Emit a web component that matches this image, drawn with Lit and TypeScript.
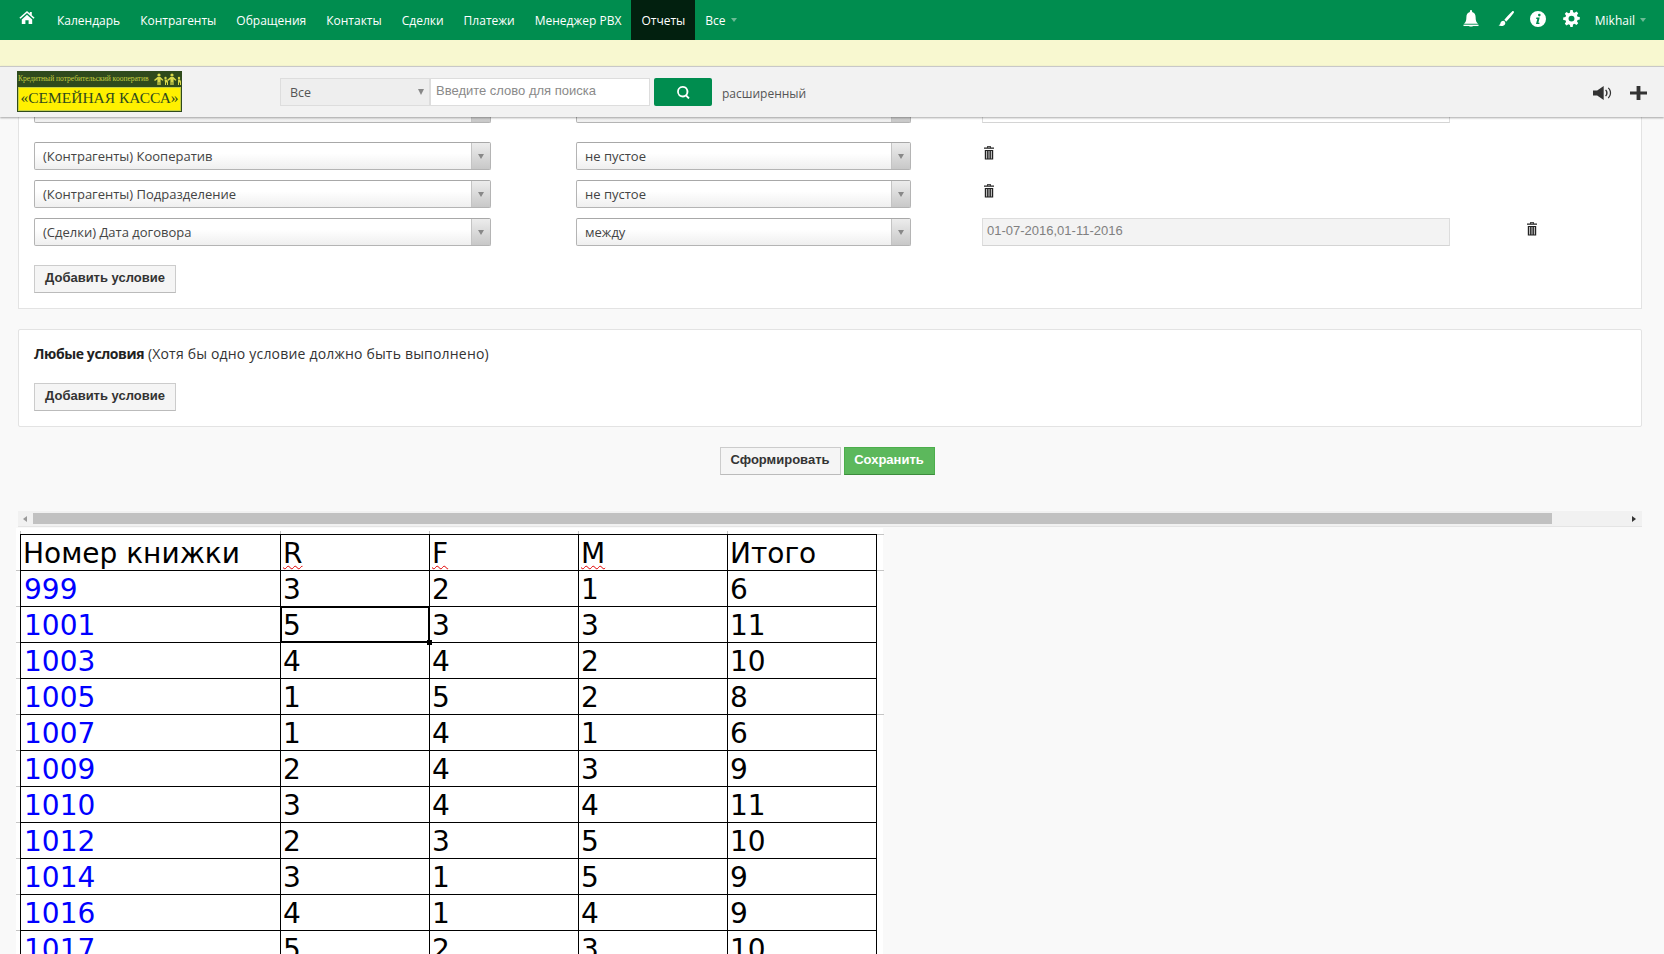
import { LitElement, html, css, svg } from 'lit';
import { customElement } from 'lit/decorators.js';

const ICON = {
  home: svg`<path d="M8 1 .4 8.200l1.100 1.200L8 3.300l6.500 6.100 1.100-1.200L12.800 5.500V2h-2v1.700z"/><path d="M2.800 10 8 5.100 13.200 10v5H9.600v-4H6.400v4H2.800z"/>`,
  bell: svg`<path d="M8 0a1.100 1.100 0 0 0-1.100 1.100v.7C4.500 2.300 3.400 4.200 3.400 6.600c0 3.300-.7 5-2.400 6.400h14c-1.700-1.400-2.400-3.100-2.400-6.400 0-2.400-1.100-4.300-3.500-4.800v-.7A1.100 1.100 0 0 0 8 0z"/><rect x="0.500" y="13.800" width="15" height="1.300"/><path d="M6.300 15.600h3.400A1.700 1.700 0 0 1 8 16.800a1.700 1.700 0 0 1-1.700-1.200z"/>`,
  brush: svg`<path d="M15.600.3c-.4-.4-1-.3-1.500.1C11.500 2.800 8 6.300 6.200 9c.9.2 1.600.9 1.900 1.800 2.400-2.200 5.700-6.200 7.700-9 .3-.5.200-1.100-.2-1.500z"/><path d="M5.400 9.800c-1.700 0-2.700 1-3 2.500-.2 1-.8 1.700-1.900 1.900 1.400 1 3.700 1.100 5.200.3 1.200-.7 1.900-1.800 1.500-3.100-.3-.9-.9-1.500-1.800-1.600z"/>`,
  info: svg`<path fill-rule="evenodd" d="M8 0a8 8 0 1 0 0 16A8 8 0 0 0 8 0zm1.300 2.800a1.300 1.300 0 1 1 0 2.600 1.300 1.300 0 0 1 0-2.600zM6.400 6.600h3.300l-1.300 5.200h1.200l-.3 1.300H6l1.300-5.200H6.100z"/>`,
  gear: svg`<path fill-rule="evenodd" d="M6.900 0h2.200l.4 2.100c.5.100 1 .3 1.400.6l1.800-1.200 1.600 1.600-1.200 1.800c.3.400.5.900.6 1.400l2.100.4v2.200l-2.100.4c-.1.500-.3 1-.6 1.400l1.200 1.800-1.600 1.600-1.800-1.200c-.4.300-.9.500-1.400.6L9.100 16H6.900l-.4-2.100c-.5-.1-1-.3-1.400-.6l-1.800 1.200-1.600-1.600 1.200-1.800c-.3-.4-.5-.9-.6-1.400L.2 9.300V7.100l2.100-.4c.1-.5.3-1 .6-1.400L1.700 3.500l1.600-1.600 1.800 1.200c.4-.3.900-.5 1.400-.6zM8 5.300a2.800 2.800 0 1 0 0 5.600 2.800 2.800 0 0 0 0-5.600z"/>`,
  speaker: svg`<path d="M0 5.500h3.500L9 1v14L3.500 10.500H0z"/><path d="M11 4.500c1.800 1.800 1.800 5.200 0 7l-.8-.8c1.200-1.400 1.200-4 0-5.400zM13.200 2.600c2.800 2.900 2.800 7.900 0 10.800l-.7-.7c2.300-2.600 2.300-6.800 0-9.400z"/>`,
  plus: svg`<path d="M6.200 0h3.600v6.200H16v3.600H9.800V16H6.200V9.800H0V6.200h6.200z"/>`,
  search: svg`<path fill-rule="evenodd" d="M7 0a7 7 0 0 1 5.500 11.300l3.100 3.100-1.700 1.700-3.100-3.100A7 7 0 1 1 7 0zm0 2.300a4.700 4.700 0 1 0 0 9.400 4.700 4.700 0 0 0 0-9.400z"/>`,
  trash: svg`<path d="M4.200 0h3.600v1.600H11v1.200H1V1.600h3.200zm1 .8v.8h1.600V.8z"/><path fill-rule="evenodd" d="M1.800 4h8.400v9.500H1.800zM3.300 5v7.500h.8V5zm2.300 0v7.500h.8V5zm2.300 0v7.500h.8V5z"/>`,
};

const icon = (name: keyof typeof ICON, w: number, h: number, cls = '') => {
  const vb = name === 'trash' ? '0 0 12 14' : '0 0 16 16';
  return html`<svg class="ic ${cls}" width=${w} height=${h} viewBox=${vb} preserveAspectRatio="none" fill="currentColor">${ICON[name]}</svg>`;
};

const NAV = ['Календарь', 'Контрагенты', 'Обращения', 'Контакты', 'Сделки', 'Платежи', 'Менеджер РВХ', 'Отчеты'];

const ROWS = [
  ['999', 3, 2, 1, 6], ['1001', 5, 3, 3, 11], ['1003', 4, 4, 2, 10], ['1005', 1, 5, 2, 8],
  ['1007', 1, 4, 1, 6], ['1009', 2, 4, 3, 9], ['1010', 3, 4, 4, 11], ['1012', 2, 3, 5, 10],
  ['1014', 3, 1, 5, 9], ['1016', 4, 1, 4, 9], ['1017', 5, 2, 3, 10],
];

@customElement('app-root')
export class AppRoot extends LitElement {
  static styles = css`
    :host {
      display: flex;
      flex-direction: column;
      height: 954px;
      overflow: hidden;
      background: #f9f9f9;
      color: #333;
      font: 13px 'Open Sans', sans-serif;
    }
    .ic { display: block; flex: none; }

    .nav {
      flex: none;
      height: 40px;
      display: flex;
      align-items: stretch;
      background: #008d4f;
      color: #fff;
      padding-left: 19px;
      font-size: 12px;
    }
    .home { align-self: center; margin: -5px 12px 0 0; }
    .item { display: flex; align-items: center; padding: 0 10px; }
    .item.active { background: #02200f; }
    .caret {
      width: 0;
      height: 0;
      margin-left: 5px;
      border: 3.500px solid transparent;
      border-top: 4px solid #6dbb95;
      border-bottom: 0;
    }
    .tools { margin-left: auto; display: flex; align-items: center; padding-right: 18px; }
    .tools .ic { margin-top: -3px; }
    .tools .user { display: flex; align-items: center; margin: 0 0 0 15px; }
    .gap19 { width: 19px; }
    .gap16 { width: 16px; }
    .gap17 { width: 17px; }

    .notice { flex: none; height: 26px; background: #f8f8d0; }

    .head {
      flex: none;
      height: 50px;
      position: relative;
      z-index: 2;
      display: flex;
      align-items: flex-start;
      background: #f2f2f2;
      border-top: 1px solid #c8c8c8;
      box-shadow: 0 1px 2px rgba(0, 0, 0, 0.35);
      padding-left: 17px;
    }
    .logo {
      width: 165px;
      height: 41px;
      margin-top: 4px;
      background: #2f4a1c;
      display: flex;
      flex-direction: column;
      box-sizing: border-box;
      padding: 2px 1px 1px;
    }
    .logo .top {
      height: 12px;
      display: flex;
      align-items: center;
      justify-content: space-between;
      color: #c5cf42;
      font: 7.500px/12px 'Liberation Serif', serif;
      white-space: nowrap;
      overflow: hidden;
    }
    .logo .name {
      flex: 1;
      margin-top: 2px;
      background: #fff000;
      border: 1px solid #c5cf42;
      color: #2f4a1c;
      font: 15.500px/20px 'Liberation Serif', serif;
      text-align: center;
      white-space: nowrap;
    }
    .search { display: flex; margin: 11px 0 0 98px; }
    .scope {
      width: 150px;
      height: 28px;
      box-sizing: border-box;
      display: flex;
      align-items: center;
      justify-content: space-between;
      background: #eee;
      border: 1px solid #ddd;
      padding: 0 5px 0 9px;
      color: #555;
      font-size: 12.500px;
    }
    .scope i {
      border: 3.500px solid transparent;
      border-top: 6px solid #888;
      border-bottom: 0;
    }
    .q {
      width: 220px;
      height: 28px;
      box-sizing: border-box;
      background: #fff;
      border: 1px solid #ddd;
      padding: 0 5px 3px;
      display: flex;
      align-items: center;
      color: #8a8a8a;
      font: 13px 'Liberation Sans', sans-serif;
    }
    .go {
      width: 58px;
      height: 28px;
      margin-left: 4px;
      display: flex;
      align-items: center;
      justify-content: center;
      border-radius: 2px;
      background: #008d4f;
      color: #fff;
    }
    .adv { margin: 13px 0 0 10px; color: #555; line-height: 27px; height: 28px; font-size: 12px; }
    .head-r { margin: 18px 17px 0 auto; display: flex; align-items: center; color: #333; gap: 18px; }

    .main { flex: 1; min-height: 0; overflow: hidden; }
    .card {
      margin: 0 22px 0 18px;
      background: #fff;
      border: 1px solid #e3e3e3;
      padding: 0 15px;
    }
    .first { border-top: 0; padding-bottom: 15px; }
    .row { display: flex; align-items: flex-start; height: 28px; margin-top: 10px; }
    .row.cut { height: 6px; margin: 0 0 19px; align-items: flex-end; }
    .row.cut + .row { margin-top: 0; }
    .sel {
      height: 28px;
      flex: none;
      box-sizing: border-box;
      display: flex;
      align-items: center;
      border: 1px solid #b4b4b4;
      border-top-color: #a8a8a8;
      border-radius: 2px;
      background: linear-gradient(#fff 40%, #efefef);
      color: #444;
      padding-left: 8px;
    }
    .sel span { flex: 1; }
    .sel i {
      align-self: stretch;
      width: 18px;
      display: flex;
      align-items: center;
      justify-content: center;
      background: linear-gradient(#ececec, #c8c8c8);
      border-left: 1px solid #c4c4c4;
    }
    .sel i::after {
      content: '';
      border: 3px solid transparent;
      border-top: 5px solid #888;
      border-bottom: 0;
    }
    .w1 { width: 457px; }
    .w2 { width: 335px; margin-left: 85px; }
    .val {
      width: 468px;
      height: 28px;
      flex: none;
      margin-left: 71px;
      box-sizing: border-box;
      border: 1px solid #ddd;
      border-bottom-color: #d4d4d4;
      padding: 0 4px 3px;
      display: flex;
      align-items: center;
      color: #808080;
      background: #f3f3f3;
      font: 13px 'Liberation Sans', sans-serif;
    }
    .val.empty { background: #fff; }
    .del { margin: 4px 0 0 72px; color: #222; }
    .val + .del { margin-left: 76px; }
    .btn {
      display: inline-flex;
      align-items: center;
      justify-content: center;
      height: 28px;
      box-sizing: border-box;
      background: #f5f5f5;
      border: 1px solid #ccc;
      border-bottom-color: #bbb;
      color: #333;
      font: bold 13px 'Liberation Sans', sans-serif;
      padding: 0 0 4px;
    }
    .add { margin-top: 19px; width: 142px; display: flex; }
    .second { margin-top: 20px; padding-top: 14px; padding-bottom: 15px; border-radius: 2px; }
    .title { line-height: 20px; font-size: 14px; letter-spacing: 0.19px; }
    .title b { font-weight: 700; color: #222; letter-spacing: -0.4px; }
    .second .add { margin-top: 19px; }
    .actions { display: flex; justify-content: center; gap: 3px; margin: 20px 22px 0 18px; padding-right: 6px; }
    .save { background: #5cb85c; border-color: #4cae4c; border-bottom-color: #3d8b3d; color: #fff; width: 91px; }
    .form { width: 121px; }

    .scroll {
      margin: 36px 22px 0 18px;
      height: 16px;
      box-sizing: border-box;
      background: #f1f1f1;
      border-bottom: 1px solid #e4e4e4;
      padding: 2px 15px 0;
      position: relative;
    }
    .thumb { width: 1519px; height: 11px; background: #c1c1c1; }
    .scroll i {
      position: absolute;
      top: 5px;
      border: 3px solid transparent;
    }
    .scroll .l { left: 5px; border-left: 0; border-right: 4px solid #9a9a9a; }
    .scroll .r { right: 6px; border-right: 0; border-left: 4px solid #333; }

    .sheet {
      margin: 1px 0 0 16px;
      width: 867px;
      padding: 6px 0 0 4px;
      box-sizing: border-box;
      background: #fff;
    }
    table {
      width: 856px;
      table-layout: fixed;
      border-collapse: collapse;
      font: 28px/33px 'DejaVu Sans', sans-serif;
      color: #000;
    }
    td, th {
      position: relative;
      height: 35px;
      padding: 2px 2px 0;
      box-sizing: border-box;
      border: 1px solid #000;
      font-weight: 400;
      text-align: left;
      white-space: nowrap;
    }
    td.num { color: #00f; padding-left: 3px; }
    .sq { text-decoration: underline wavy #e00000 1px; text-underline-offset: 2px; }
    .cur { position: absolute; inset: -1px; border: 2px solid #000; pointer-events: none; }
    .cur::after {
      content: '';
      position: absolute;
      right: -4px;
      bottom: -4px;
      width: 5px;
      height: 5px;
      background: #000;
    }
    .tk { position: absolute; background: #c4c4c4; }
    .tk.t { top: -4px; left: -1px; width: 1px; height: 3px; }
    .tk.l { left: -5px; top: -1px; height: 1px; width: 4px; }
    .tk.r { right: -8px; top: -1px; height: 1px; width: 7px; }
  `;

  private sel(text: string, cls: string) {
    return html`<div class="sel ${cls}"><span>${text}</span><i></i></div>`;
  }

  private cond(field: string, op: string, value?: string) {
    return html`
      <div class="row">
        ${this.sel(field, 'w1')}
        ${this.sel(op, 'w2')}
        ${value ? html`<div class="val">${value}</div>` : ''}
        <div class="del">${icon('trash', 12, 14)}</div>
      </div>
    `;
  }

  render() {
    return html`
      <div class="nav">
        ${icon('home', 16, 15, 'home')}
        ${NAV.map((n) => html`<div class="item ${n === 'Отчеты' ? 'active' : ''}">${n}</div>`)}
        <div class="item">Все<span class="caret"></span></div>
        <div class="tools">
          ${icon('bell', 16, 17)}
          <span class="gap19"></span>
          ${icon('brush', 16, 16)}
          <span class="gap16"></span>
          ${icon('info', 16, 16)}
          <span class="gap17"></span>
          ${icon('gear', 17, 17)}
          <div class="user">Mikhail<span class="caret"></span></div>
        </div>
      </div>
      <div class="notice"></div>
      <div class="head">
        <div class="logo">
          <div class="top">
            Кредитный потребительский кооператив
            <svg width="30" height="12" viewBox="0 0 30 12" fill="#d8d84a">
              <circle cx="8" cy="2" r="1.600"/><path d="M6.500 4h3l3 3-1 .8L9.600 6.200V12H8.300V9H7.700v3H6.400V6.200L4 8 3 7z"/>
              <circle cx="21" cy="2" r="1.600"/><path d="M19.500 4h3l3 3-1 .8-1.900-1.600V12h-1.300V9h-.6v3h-1.300V6.200L17 8l-1-1z"/>
              <circle cx="14.500" cy="5" r="1.200"/><path d="M13.500 6.500h2l1.500 2v3.500h-1V9.500h-1V12h-1V9.500z"/>
              <circle cx="28" cy="5" r="1.200"/><path d="M27 6.500h2l1 2V12h-1V9.500h-1V12h-1z"/>
            </svg>
          </div>
          <div class="name">«СЕМЕЙНАЯ КАССА»</div>
        </div>
        <div class="search">
          <div class="scope">Все<i></i></div>
          <div class="q">Введите слово для поиска</div>
          <div class="go">${icon('search', 13, 13)}</div>
        </div>
        <div class="adv">расширенный</div>
        <div class="head-r">${icon('speaker', 19, 16)}${icon('plus', 17, 14)}</div>
      </div>
      <div class="main">
        <div class="card first">
          <div class="row cut">
            ${this.sel('', 'w1')}
            ${this.sel('', 'w2')}
            <div class="val empty"></div>
          </div>
          ${this.cond('(Контрагенты) Кооператив', 'не пустое')}
          ${this.cond('(Контрагенты) Подразделение', 'не пустое')}
          ${this.cond('(Сделки) Дата договора', 'между', '01-07-2016,01-11-2016')}
          <div class="btn add">Добавить условие</div>
        </div>
        <div class="card second">
          <div class="title"><b>Любые условия</b> (Хотя бы одно условие должно быть выполнено)</div>
          <div class="btn add">Добавить условие</div>
        </div>
        <div class="actions">
          <div class="btn form">Сформировать</div>
          <div class="btn save">Сохранить</div>
        </div>
        <div class="scroll"><i class="l"></i><div class="thumb"></div><i class="r"></i></div>
        <div class="sheet">
          <table>
            <colgroup><col style="width:260px" /><col style="width:149px" /><col style="width:149px" /><col style="width:149px" /><col style="width:149px" /></colgroup>
            <tr>
              <th>Номер книжки<i class="tk t"></i></th>
              <th><span class="sq">R</span><i class="tk t"></i></th>
              <th><span class="sq">F</span><i class="tk t"></i></th>
              <th><span class="sq">M</span><i class="tk t"></i></th>
              <th>Итого<i class="tk t"></i><i class="tk r"></i></th>
            </tr>
            ${ROWS.map(
              (r, i) => html`<tr>
                <td class="num">${r[0]}<i class="tk l"></i></td>
                <td>${r[1]}${i === 1 ? html`<span class="cur"></span>` : ''}</td>
                <td>${r[2]}</td>
                <td>${r[3]}</td>
                <td>${r[4]}${i === 0 || i === 4 ? html`<i class="tk r"></i>` : ''}</td>
              </tr>`,
            )}
          </table>
        </div>
      </div>
    `;
  }
}
